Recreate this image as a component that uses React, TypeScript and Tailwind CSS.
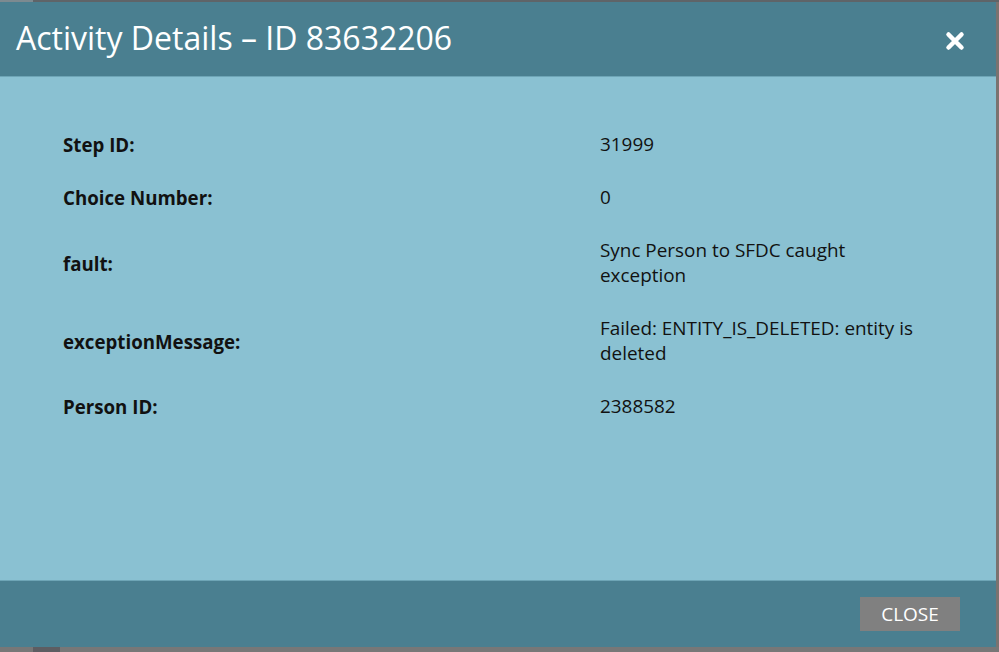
import React from "react";

const rows: { label: string; value: string }[] = [
  { label: "Step ID:", value: "31999" },
  { label: "Choice Number:", value: "0" },
  { label: "fault:", value: "Sync Person to SFDC caught exception" },
  { label: "exceptionMessage:", value: "Failed: ENTITY_IS_DELETED: entity is deleted" },
  { label: "Person ID:", value: "2388582" },
];

export default function App() {
  return (
    <div
      className="w-[999px] h-[652px] flex flex-col bg-[#757575] overflow-hidden"
      style={{ fontFamily: '"Open Sans", "Noto Sans", sans-serif' }}
    >
      <div className="h-[2px] flex shrink-0">
        <div className="w-[33px] bg-[#7d8a90]" />
        <div className="flex-1 bg-[#5f6468]" />
      </div>
      <div className="flex flex-1 min-h-0">
        <div className="w-[996px] flex flex-col">
          <div className="h-[75px] shrink-0 bg-[#4a7f90] flex items-center justify-between pl-[16px] pr-[31px] border-b border-[#6ea5b6]">
            <h1 className="text-white text-[32px] leading-none pb-[2px]">
              Activity Details – ID 83632206
            </h1>
            <svg width="20" height="20" viewBox="0 0 20 20" className="mt-[3px]">
              <path
                d="M3.5 3.5 L16.5 16.5 M16.5 3.5 L3.5 16.5"
                stroke="white"
                strokeWidth="4.5"
                strokeLinecap="round"
              />
            </svg>
          </div>
          <div className="flex-1 bg-[#8ac1d2] pt-[41px] pl-[63px] border-b border-[#6ea5b6]">
            <table className="border-collapse">
              <tbody>
                {rows.map((r) => (
                  <tr key={r.label}>
                    <td className="w-[537px] py-[14px] align-middle font-bold text-[18.7px] leading-[25px] text-[#111]">
                      {r.label}
                    </td>
                    <td className="w-[330px] py-[14px] align-middle text-[18.9px] leading-[25px] text-[#111]">
                      {r.value}
                    </td>
                  </tr>
                ))}
              </tbody>
            </table>
          </div>
          <div className="h-[66px] shrink-0 bg-[#4a7f90] flex justify-end items-start pt-[16px] pr-[36px]">
            <button className="w-[100px] h-[34px] bg-[#808080] text-white text-[19px] leading-none flex items-center justify-center">
              CLOSE
            </button>
          </div>
        </div>
        <div className="w-[3px] bg-[#7a7370]" />
      </div>
      <div className="h-[5px] shrink-0 flex bg-[#777777]">
        <div className="w-[33px]" />
        <div className="w-[27px] bg-[#5d5d62]" />
      </div>
    </div>
  );
}
